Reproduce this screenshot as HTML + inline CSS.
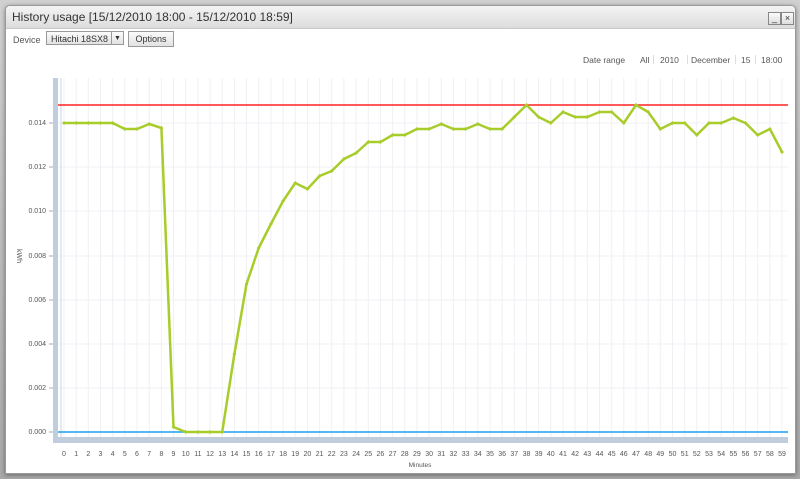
<!DOCTYPE html><html><head><style>
body{margin:0;width:800px;height:479px;background:linear-gradient(#d0d0d0,#a8a8a8);font-family:"Liberation Sans",sans-serif;overflow:hidden;position:relative}
.win{position:absolute;left:5px;top:5px;width:789px;height:467px;background:#fff;border:1px solid #9a9a9a;border-radius:5px 5px 0 0;box-shadow:0 1px 4px rgba(0,0,0,.4);overflow:hidden}
.tb{height:22px;background:linear-gradient(#f4f4f4,#dcdcdc);border-bottom:1px solid #c8c8c8;font-size:12px;color:#333;line-height:22px;padding-left:6px}
.btn{position:absolute;top:6px;width:11px;height:11px;border:1px solid #888;background:linear-gradient(#fafafa,#ddd);font-size:9px;line-height:10px;text-align:center;color:#333}
.lbl{position:absolute;font-size:9px;color:#555}
.sel{position:absolute;left:40px;top:25px;height:14px;border:1px solid #999;background:linear-gradient(#fbfbfb,#e2e2e2);font-size:9px;line-height:14px;color:#333;padding-left:4px;box-sizing:border-box;width:78px}
.opt{position:absolute;left:122px;top:25px;width:44px;height:14px;border:1px solid #999;background:linear-gradient(#fbfbfb,#e2e2e2);font-size:9px;line-height:14px;text-align:center;color:#333}
</style></head><body>
<div class="win">
<div class="tb">History usage [15/12/2010 18:00 - 15/12/2010 18:59]</div>
<div class="btn" style="left:762px">_</div><div class="btn" style="left:775px">×</div>
<div class="lbl" style="left:7px;top:29px">Device</div>
<div class="sel">Hitachi 18SX8<span style="position:absolute;right:0;top:0;width:11px;height:12px;border-left:1px solid #999;text-align:center;font-size:7px">▼</span></div>
<div class="opt">Options</div>
</div>
<svg width="800" height="479" style="position:absolute;left:0;top:0" font-family="Liberation Sans,sans-serif" font-size="7" fill="#555">
<g font-size="8.5" fill="#555"><text x="583" y="63">Date range</text><text x="640" y="63">All</text><text x="660" y="63">2010</text><text x="691" y="63">December</text><text x="741" y="63">15</text><text x="761" y="63">18:00</text></g>
<g stroke="#ddd"><line x1="653.5" y1="55" x2="653.5" y2="64"/><line x1="687.5" y1="55" x2="687.5" y2="64"/><line x1="735.5" y1="55" x2="735.5" y2="64"/><line x1="755.5" y1="55" x2="755.5" y2="64"/></g>
<g stroke="#f0f0f4" stroke-width="1">
<line x1="64" y1="78" x2="64" y2="437"/><line x1="76.2" y1="78" x2="76.2" y2="437"/><line x1="88.3" y1="78" x2="88.3" y2="437"/><line x1="100.5" y1="78" x2="100.5" y2="437"/><line x1="112.7" y1="78" x2="112.7" y2="437"/><line x1="124.8" y1="78" x2="124.8" y2="437"/><line x1="137" y1="78" x2="137" y2="437"/><line x1="149.2" y1="78" x2="149.2" y2="437"/><line x1="161.4" y1="78" x2="161.4" y2="437"/><line x1="173.5" y1="78" x2="173.5" y2="437"/><line x1="185.7" y1="78" x2="185.7" y2="437"/><line x1="197.9" y1="78" x2="197.9" y2="437"/><line x1="210" y1="78" x2="210" y2="437"/><line x1="222.2" y1="78" x2="222.2" y2="437"/><line x1="234.4" y1="78" x2="234.4" y2="437"/><line x1="246.5" y1="78" x2="246.5" y2="437"/><line x1="258.7" y1="78" x2="258.7" y2="437"/><line x1="270.9" y1="78" x2="270.9" y2="437"/><line x1="283.1" y1="78" x2="283.1" y2="437"/><line x1="295.2" y1="78" x2="295.2" y2="437"/><line x1="307.4" y1="78" x2="307.4" y2="437"/><line x1="319.6" y1="78" x2="319.6" y2="437"/><line x1="331.7" y1="78" x2="331.7" y2="437"/><line x1="343.9" y1="78" x2="343.9" y2="437"/><line x1="356.1" y1="78" x2="356.1" y2="437"/><line x1="368.3" y1="78" x2="368.3" y2="437"/><line x1="380.4" y1="78" x2="380.4" y2="437"/><line x1="392.6" y1="78" x2="392.6" y2="437"/><line x1="404.8" y1="78" x2="404.8" y2="437"/><line x1="416.9" y1="78" x2="416.9" y2="437"/><line x1="429.1" y1="78" x2="429.1" y2="437"/><line x1="441.3" y1="78" x2="441.3" y2="437"/><line x1="453.4" y1="78" x2="453.4" y2="437"/><line x1="465.6" y1="78" x2="465.6" y2="437"/><line x1="477.8" y1="78" x2="477.8" y2="437"/><line x1="490" y1="78" x2="490" y2="437"/><line x1="502.1" y1="78" x2="502.1" y2="437"/><line x1="514.3" y1="78" x2="514.3" y2="437"/><line x1="526.5" y1="78" x2="526.5" y2="437"/><line x1="538.6" y1="78" x2="538.6" y2="437"/><line x1="550.8" y1="78" x2="550.8" y2="437"/><line x1="563" y1="78" x2="563" y2="437"/><line x1="575.1" y1="78" x2="575.1" y2="437"/><line x1="587.3" y1="78" x2="587.3" y2="437"/><line x1="599.5" y1="78" x2="599.5" y2="437"/><line x1="611.7" y1="78" x2="611.7" y2="437"/><line x1="623.8" y1="78" x2="623.8" y2="437"/><line x1="636" y1="78" x2="636" y2="437"/><line x1="648.2" y1="78" x2="648.2" y2="437"/><line x1="660.3" y1="78" x2="660.3" y2="437"/><line x1="672.5" y1="78" x2="672.5" y2="437"/><line x1="684.7" y1="78" x2="684.7" y2="437"/><line x1="696.8" y1="78" x2="696.8" y2="437"/><line x1="709" y1="78" x2="709" y2="437"/><line x1="721.2" y1="78" x2="721.2" y2="437"/><line x1="733.4" y1="78" x2="733.4" y2="437"/><line x1="745.5" y1="78" x2="745.5" y2="437"/><line x1="757.7" y1="78" x2="757.7" y2="437"/><line x1="769.9" y1="78" x2="769.9" y2="437"/><line x1="782" y1="78" x2="782" y2="437"/>
<line x1="58" y1="388" x2="788" y2="388"/><line x1="58" y1="344" x2="788" y2="344"/><line x1="58" y1="300" x2="788" y2="300"/><line x1="58" y1="256" x2="788" y2="256"/><line x1="58" y1="211" x2="788" y2="211"/><line x1="58" y1="167" x2="788" y2="167"/><line x1="58" y1="123" x2="788" y2="123"/>
</g>
<rect x="53" y="78" width="5" height="365" fill="#bfcddd"/>
<rect x="53" y="437" width="735" height="6" fill="#bfcddd"/>
<line x1="61" y1="78" x2="61" y2="437" stroke="#c8d6e8"/>
<g stroke="#aab" stroke-width="1"><line x1="49" y1="432" x2="53" y2="432"/><line x1="49" y1="388" x2="53" y2="388"/><line x1="49" y1="344" x2="53" y2="344"/><line x1="49" y1="300" x2="53" y2="300"/><line x1="49" y1="256" x2="53" y2="256"/><line x1="49" y1="211" x2="53" y2="211"/><line x1="49" y1="167" x2="53" y2="167"/><line x1="49" y1="123" x2="53" y2="123"/></g>
<g text-anchor="end"><text x="46" y="434">0.000</text><text x="46" y="390">0.002</text><text x="46" y="346">0.004</text><text x="46" y="302">0.006</text><text x="46" y="258">0.008</text><text x="46" y="213">0.010</text><text x="46" y="169">0.012</text><text x="46" y="125">0.014</text></g>
<text x="17" y="256" transform="rotate(90 17 256)" text-anchor="middle">kWh</text>
<line x1="58" y1="105" x2="788" y2="105" stroke="#f22" stroke-width="1.5"/>
<line x1="58" y1="432" x2="788" y2="432" stroke="#1aa0ee" stroke-width="1.5"/>
<polyline fill="none" stroke="#a8cc2a" stroke-width="2.5" stroke-linejoin="round" stroke-dasharray="" marker-mid="url(#m)" marker-start="url(#m)" marker-end="url(#m)" points="64,123 76.2,123 88.3,123 100.5,123 112.7,123 124.8,129 137,129 149.2,124 161.4,128 173.5,427 185.7,432 197.9,432 210,432 222.2,432 234.4,354 246.5,284 258.7,248 270.9,224 283.1,201 295.2,183 307.4,189 319.6,176 331.7,171 343.9,159 356.1,153 368.3,142 380.4,142 392.6,135 404.8,135 416.9,129 429.1,129 441.3,124 453.4,129 465.6,129 477.8,124 490,129 502.1,129 514.3,117 526.5,105 538.6,117 550.8,123 563,112 575.1,117 587.3,117 599.5,112 611.7,112 623.8,123 636,105 648.2,112 660.3,129 672.5,123 684.7,123 696.8,135 709,123 721.2,123 733.4,118 745.5,123 757.7,135 769.9,129 782,152"/>
<defs><marker id="m" markerWidth="4" markerHeight="4" refX="2" refY="2" markerUnits="userSpaceOnUse"><path d="M2 0L4 2L2 4L0 2Z" fill="#a8cc2a"/></marker></defs>
<g text-anchor="middle"><text x="64" y="456">0</text><text x="76.2" y="456">1</text><text x="88.3" y="456">2</text><text x="100.5" y="456">3</text><text x="112.7" y="456">4</text><text x="124.8" y="456">5</text><text x="137" y="456">6</text><text x="149.2" y="456">7</text><text x="161.4" y="456">8</text><text x="173.5" y="456">9</text><text x="185.7" y="456">10</text><text x="197.9" y="456">11</text><text x="210" y="456">12</text><text x="222.2" y="456">13</text><text x="234.4" y="456">14</text><text x="246.5" y="456">15</text><text x="258.7" y="456">16</text><text x="270.9" y="456">17</text><text x="283.1" y="456">18</text><text x="295.2" y="456">19</text><text x="307.4" y="456">20</text><text x="319.6" y="456">21</text><text x="331.7" y="456">22</text><text x="343.9" y="456">23</text><text x="356.1" y="456">24</text><text x="368.3" y="456">25</text><text x="380.4" y="456">26</text><text x="392.6" y="456">27</text><text x="404.8" y="456">28</text><text x="416.9" y="456">29</text><text x="429.1" y="456">30</text><text x="441.3" y="456">31</text><text x="453.4" y="456">32</text><text x="465.6" y="456">33</text><text x="477.8" y="456">34</text><text x="490" y="456">35</text><text x="502.1" y="456">36</text><text x="514.3" y="456">37</text><text x="526.5" y="456">38</text><text x="538.6" y="456">39</text><text x="550.8" y="456">40</text><text x="563" y="456">41</text><text x="575.1" y="456">42</text><text x="587.3" y="456">43</text><text x="599.5" y="456">44</text><text x="611.7" y="456">45</text><text x="623.8" y="456">46</text><text x="636" y="456">47</text><text x="648.2" y="456">48</text><text x="660.3" y="456">49</text><text x="672.5" y="456">50</text><text x="684.7" y="456">51</text><text x="696.8" y="456">52</text><text x="709" y="456">53</text><text x="721.2" y="456">54</text><text x="733.4" y="456">55</text><text x="745.5" y="456">56</text><text x="757.7" y="456">57</text><text x="769.9" y="456">58</text><text x="782" y="456">59</text>
<text x="420" y="467" font-size="6.5">Minutes</text></g>
</svg>
</body></html>
